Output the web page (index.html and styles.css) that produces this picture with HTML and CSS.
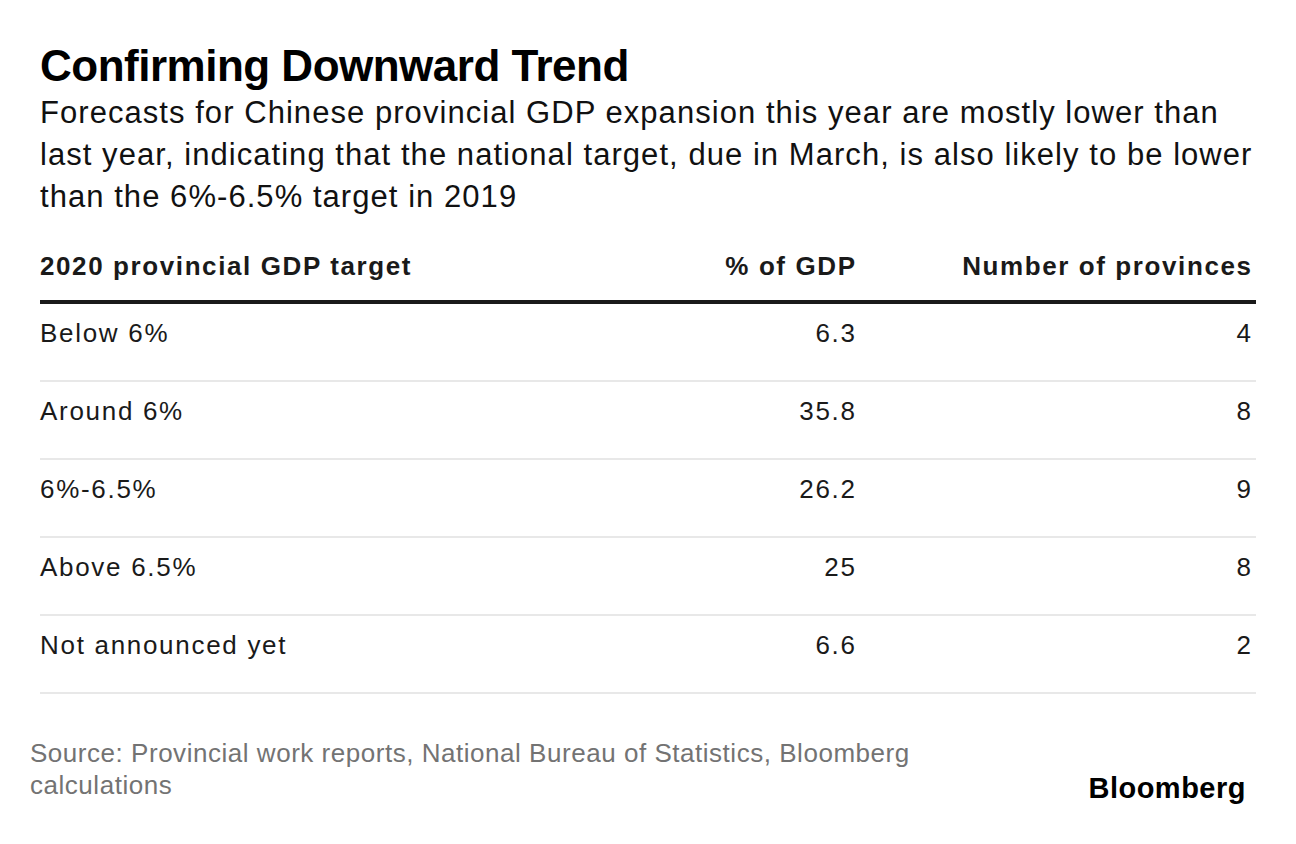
FILE: index.html
```html
<!DOCTYPE html>
<html>
<head>
<meta charset="utf-8">
<link rel="stylesheet" href="styles.css">
</head>
<body>
<div class="chart">
  <h1 class="title">Confirming Downward Trend</h1>
  <p class="subtitle">Forecasts for Chinese provincial GDP expansion this year are mostly lower than<br>last year, indicating that the national target, due in March, is also likely to be lower<br>than the 6%-6.5% target in 2019</p>
  <div class="table">
    <div class="row head">
      <div class="c1">2020 provincial GDP target</div>
      <div class="c2">% of GDP</div>
      <div class="c3">Number of provinces</div>
    </div>
    <div class="row">
      <div class="c1">Below 6%</div><div class="c2">6.3</div><div class="c3">4</div>
    </div>
    <div class="row">
      <div class="c1">Around 6%</div><div class="c2">35.8</div><div class="c3">8</div>
    </div>
    <div class="row">
      <div class="c1">6%-6.5%</div><div class="c2">26.2</div><div class="c3">9</div>
    </div>
    <div class="row">
      <div class="c1">Above 6.5%</div><div class="c2">25</div><div class="c3">8</div>
    </div>
    <div class="row">
      <div class="c1">Not announced yet</div><div class="c2">6.6</div><div class="c3">2</div>
    </div>
  </div>
  <div class="footer">
    <p class="source">Source: Provincial work reports, National Bureau of Statistics, Bloomberg<br>calculations</p>
    <div class="logo">Bloomberg</div>
  </div>
</div>
</body>
</html>
```
FILE: styles.css
```css
html, body {
  margin: 0;
  padding: 0;
  background: #fff;
}
body {
  font-family: "Liberation Sans", Arial, sans-serif;
  color: #1a1a1a;
}
.chart {
  width: 1296px;
  height: 844px;
  box-sizing: border-box;
  padding: 40px 40px 0 40px;
}
.title {
  margin: 0;
  font-size: 44px;
  line-height: 52px;
  font-weight: 700;
  color: #000;
  letter-spacing: -0.5px;
}
.subtitle {
  margin: 0;
  font-size: 31px;
  line-height: 42px;
  color: #111;
  letter-spacing: 1.05px;
  white-space: nowrap;
}
.table {
  margin-top: 33px;
}
.row {
  display: flex;
  align-items: flex-start;
  height: 62px;
  padding-top: 14px;
  border-bottom: 2px solid #e8e8e8;
  font-size: 26px;
  line-height: 30px;
  letter-spacing: 1.7px;
}
.row.head {
  height: 49px;
  padding-top: 0;
  border-bottom: 4px solid #1a1a1a;
  font-weight: 700;
  letter-spacing: 1.6px;
}
.c1 {
  flex: 1;
}
.c2 {
  width: 300px;
  text-align: right;
}
.c3 {
  width: 396px;
  text-align: right;
  padding-right: 5px;
  margin-right: -1.7px;
}
.head .c3 {
  margin-right: -1.6px;
}
.footer {
  display: flex;
  justify-content: space-between;
  align-items: flex-end;
  margin-left: -10px;
  margin-top: 43px;
}
.source {
  margin: 0;
  font-size: 26px;
  line-height: 32px;
  color: #737373;
  letter-spacing: 0.53px;
  white-space: nowrap;
}
.logo {
  font-size: 29px;
  line-height: 32px;
  font-weight: 700;
  color: #000;
  letter-spacing: 0.5px;
  margin-right: 10px;
  margin-bottom: -3px;
}
```
